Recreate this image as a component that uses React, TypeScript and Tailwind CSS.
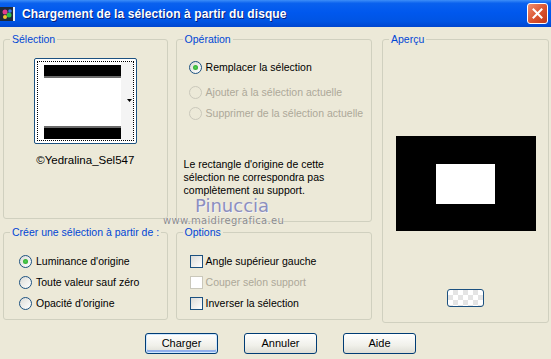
import React from 'react';
import { clsx } from 'clsx';

function Group({ label, className, children }: { label: string; className?: string; children?: React.ReactNode }) {
  return (
    <fieldset className={clsx('border border-[#D0D0BF] rounded-[3px] min-w-0', className)}>
      <legend className="ml-[6px] px-[2px] text-[#0046D5] leading-[13px] whitespace-nowrap">{label}</legend>
      {children}
    </fieldset>
  );
}

function Radio({ checked, disabled }: { checked?: boolean; disabled?: boolean }) {
  return (
    <span
      className={clsx(
        'w-[13px] h-[13px] rounded-full border flex items-center justify-center shrink-0',
        disabled
          ? 'border-[#CAC8BB] bg-[#ECE9D8]'
          : 'border-[#1C5180] bg-[linear-gradient(135deg,#DCDCD7,#FFFFFF)]'
      )}
    >
      {checked && <span className="w-[5px] h-[5px] rounded-full bg-[radial-gradient(circle,#55D055,#21A121)]" />}
    </span>
  );
}

function Check({ disabled }: { disabled?: boolean }) {
  return (
    <span
      className={clsx(
        'w-[13px] h-[13px] border shrink-0',
        disabled ? 'border-[#CAC8BB] bg-white' : 'border-[#1C5180] bg-[linear-gradient(135deg,#DCDCD7,#FFFFFF)]'
      )}
    />
  );
}

function XpButton({ label, primary }: { label: string; primary?: boolean }) {
  return (
    <button
      className={clsx(
        'w-[73px] h-[21px] rounded-[3px] border border-[#003C74] bg-[linear-gradient(to_bottom,#FFFFFF,#F0F0EA_60%,#DEDDD5)] text-black leading-none',
        primary && 'shadow-[inset_0_0_0_1px_#CEE7FF,inset_0_-2px_0_1px_#90AFEC]'
      )}
    >
      {label}
    </button>
  );
}

export default function App() {
  return (
    <div className="w-[551px] h-[359px] bg-[#ECE9D8] text-[10.5px] text-black font-['Liberation_Sans',Arial,sans-serif] overflow-hidden">
      {/* Title bar */}
      <div className="h-[27px] flex items-center bg-[linear-gradient(to_bottom,#3D8EF8_0%,#0A61EE_12%,#0058EE_45%,#0054E3_80%,#0046CF_100%)]">
        <svg width="16" height="16" viewBox="0 0 16 16" className="ml-0 shrink-0">
          <rect x="0" y="1" width="14" height="14" fill="#1F2A3A" />
          <circle cx="5" cy="6" r="2.5" fill="#E23C8E" />
          <circle cx="9" cy="9" r="2.5" fill="#2FBF4A" />
          <circle cx="5" cy="11" r="2" fill="#F2C230" />
          <circle cx="10" cy="5" r="1.8" fill="#3A7CF0" />
          <rect x="13" y="1" width="2" height="14" fill="#E8EEF8" />
        </svg>
        <span className="ml-[6px] text-white font-bold text-[12px] tracking-[0.1px] [text-shadow:1px_1px_0_#0A1E78]">
          Chargement de la sélection à partir du disque
        </span>
        <div className="ml-auto mr-[3px] w-[21px] h-[21px] rounded-[3px] border border-white bg-[linear-gradient(135deg,#F08E70,#D9522E_55%,#C0391A)] flex items-center justify-center">
          <svg width="11" height="11" viewBox="0 0 11 11">
            <path d="M1.5 1.5 L9.5 9.5 M9.5 1.5 L1.5 9.5" stroke="white" strokeWidth="2" strokeLinecap="square" />
          </svg>
        </div>
      </div>

      {/* Body */}
      <div className="relative">
        <div className="flex pl-[3px] pt-[6px]">
          <div className="flex flex-col w-[369px]">
            <div className="flex">
              {/* Sélection */}
              <Group label="Sélection" className="w-[165px] h-[186px]">
                <div className="flex flex-col items-center">
                  <div className="mt-[12px] w-[103px] h-[86px] rounded-[2px] border border-[#1C5180] bg-white p-[2px]">
                    <div className="w-full h-full border border-dotted border-black flex">
                      <div className="flex-1 flex flex-col pt-[3px] pl-[6px]">
                        <div className="h-[13px] bg-black border-b-2 border-[#6B6B6B]" />
                        <div className="flex-1" />
                        <div className="h-[13px] bg-black border-t-2 border-[#6B6B6B] mb-[1px]" />
                      </div>
                      <div className="w-[12px] bg-[#F4F4F4] flex items-center justify-end pr-[1px]">
                        <svg width="5" height="4" viewBox="0 0 5 4">
                          <path d="M0 0 H5 L2.5 3 Z" fill="black" />
                        </svg>
                      </div>
                    </div>
                  </div>
                  <div className="mt-[10px] leading-[13px] text-[11.5px]">©Yedralina_Sel547</div>
                </div>
              </Group>

              {/* Opération */}
              <Group label="Opération" className="ml-[8px] w-[197px] h-[189px]">
                <div className="flex flex-col pl-[12px] pt-[15px]">
                  <div className="flex items-center gap-[4px] h-[13px]">
                    <Radio checked />
                    <span>Remplacer la sélection</span>
                  </div>
                  <div className="flex items-center gap-[4px] h-[13px] mt-[12px] text-[#ACA899]">
                    <Radio disabled />
                    <span>Ajouter à la sélection actuelle</span>
                  </div>
                  <div className="flex items-center gap-[4px] h-[13px] mt-[8px] text-[#ACA899]">
                    <Radio disabled />
                    <span>Supprimer de la sélection actuelle</span>
                  </div>
                </div>
                <p className="ml-[7px] mt-[38px] leading-[13px]">
                  Le rectangle d'origine de cette
                  <br />
                  sélection ne correspondra pas
                  <br />
                  complètement au support.
                </p>
              </Group>
            </div>

            <div className="flex mt-[4px]">
              {/* Créer une sélection */}
              <Group label="Créer une sélection à partir de :" className="w-[165px] h-[94px]">
                <div className="flex flex-col pl-[15px] pt-[16px] gap-[8px]">
                  <div className="flex items-center gap-[4px] h-[13px]">
                    <Radio checked />
                    <span>Luminance d'origine</span>
                  </div>
                  <div className="flex items-center gap-[4px] h-[13px]">
                    <Radio />
                    <span>Toute valeur sauf zéro</span>
                  </div>
                  <div className="flex items-center gap-[4px] h-[13px]">
                    <Radio />
                    <span>Opacité d'origine</span>
                  </div>
                </div>
              </Group>

              {/* Options */}
              <Group label="Options" className="ml-[8px] w-[197px] h-[94px]">
                <div className="flex flex-col pl-[13px] pt-[16px] gap-[8px]">
                  <div className="flex items-center gap-[3px] h-[13px]">
                    <Check />
                    <span>Angle supérieur gauche</span>
                  </div>
                  <div className="flex items-center gap-[3px] h-[13px] text-[#ACA899]">
                    <Check disabled />
                    <span>Couper selon support</span>
                  </div>
                  <div className="flex items-center gap-[3px] h-[13px]">
                    <Check />
                    <span>Inverser la sélection</span>
                  </div>
                </div>
              </Group>
            </div>
          </div>

          {/* Aperçu */}
          <Group label="Aperçu" className="ml-[10px] w-[167px] h-[290px]">
            <div className="flex flex-col items-center">
              <div className="mt-[90px] w-[140px] h-[95px] bg-black flex items-center justify-center">
                <div className="w-[59px] h-[40px] bg-white" />
              </div>
              <div className="mt-[58px] w-[37px] h-[18px] rounded-[3px] border border-[#1C5180] bg-[conic-gradient(#E4E4E4_25%,#FFFFFF_0_50%,#E4E4E4_0_75%,#FFFFFF_0)] bg-[length:10px_10px]" />
            </div>
          </Group>
        </div>

        {/* Buttons */}
        <div className="flex pl-[145px] gap-[26px] mt-[10px] text-[11px]">
          <XpButton label="Charger" primary />
          <XpButton label="Annuler" />
          <XpButton label="Aide" />
        </div>

        {/* Watermark */}
        <div className="absolute left-[163px] top-[170px] flex flex-col items-start pointer-events-none">
          <span className="ml-[32px] text-[18px] leading-[18px] text-[#8C8FBE] font-['DejaVu_Sans',sans-serif] [text-shadow:1px_1px_0_#F4F4FA]">
            Pinuccia
          </span>
          <span className="mt-[1px] text-[10px] leading-[10px] text-[#8A8A8A] font-['DejaVu_Sans',sans-serif] tracking-[0.3px] [text-shadow:0_0_1px_#FFFFFF]">
            www.maidiregrafica.eu
          </span>
        </div>
      </div>
    </div>
  );
}
